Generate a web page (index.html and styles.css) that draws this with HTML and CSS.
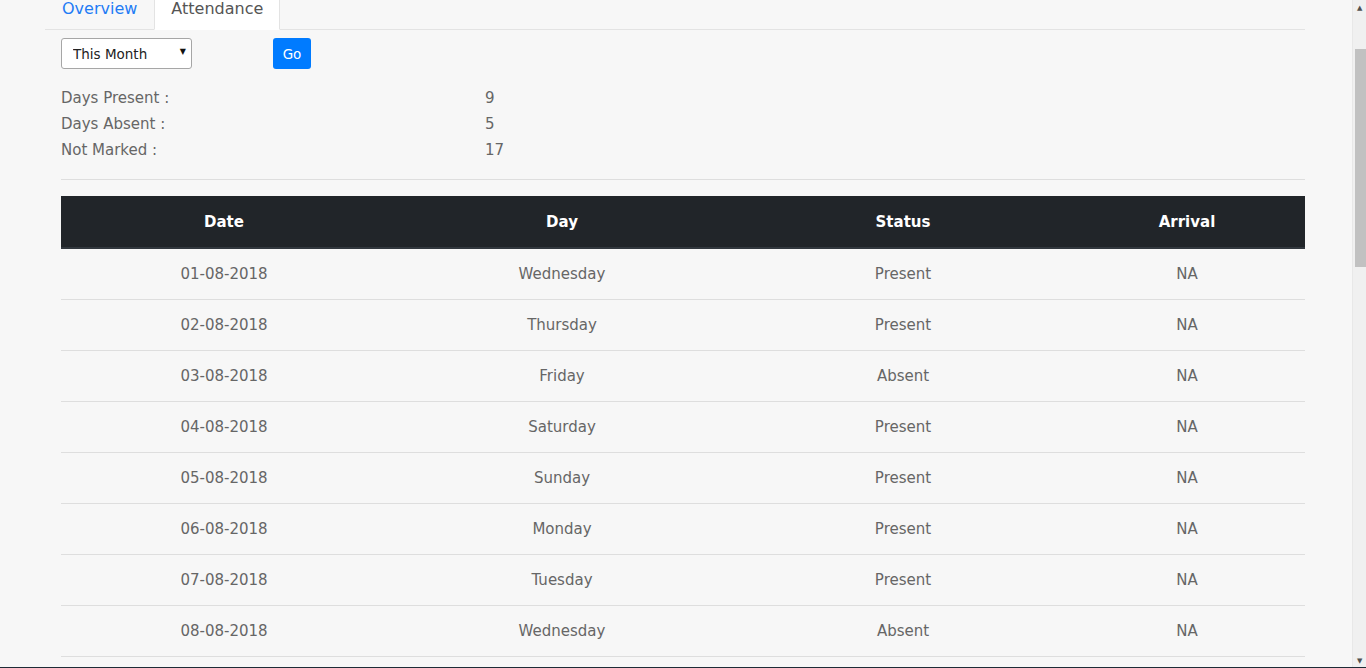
FILE: index.html
```html
<!DOCTYPE html>
<html lang="en">
<head>
    <meta charset="UTF-8">
    <meta name="viewport" content="width=device-width, initial-scale=1.0">
    <title>Attendance</title>
    <link rel="stylesheet" href="styles.css">
</head>
<body>
    <div class="page">
        <ul class="tabs">
            <li><a href="#" class="tab-link">Overview</a></li>
            <li><a href="#" class="tab-link active">Attendance</a></li>
        </ul>
        <div class="tab-content">
            <form class="filter">
                <span class="select-wrap">
                    <select class="period">
                        <option>This Month</option>
                        <option>Last Month</option>
                    </select>
                    <span class="caret">&#9660;</span>
                </span>
                <button type="button" class="go">Go</button>
            </form>

            <div class="summary">
                <div class="summary-row"><span class="label">Days Present :</span><span class="value">9</span></div>
                <div class="summary-row"><span class="label">Days Absent :</span><span class="value">5</span></div>
                <div class="summary-row"><span class="label">Not Marked :</span><span class="value">17</span></div>
            </div>

            <hr class="divider">

            <table class="attendance">
                <thead>
                    <tr>
                        <th class="c-date">Date</th>
                        <th class="c-day">Day</th>
                        <th class="c-status">Status</th>
                        <th class="c-arrival">Arrival</th>
                    </tr>
                </thead>
                <tbody>
                    <tr><td>01-08-2018</td><td>Wednesday</td><td>Present</td><td>NA</td></tr>
                    <tr><td>02-08-2018</td><td>Thursday</td><td>Present</td><td>NA</td></tr>
                    <tr><td>03-08-2018</td><td>Friday</td><td>Absent</td><td>NA</td></tr>
                    <tr><td>04-08-2018</td><td>Saturday</td><td>Present</td><td>NA</td></tr>
                    <tr><td>05-08-2018</td><td>Sunday</td><td>Present</td><td>NA</td></tr>
                    <tr><td>06-08-2018</td><td>Monday</td><td>Present</td><td>NA</td></tr>
                    <tr><td>07-08-2018</td><td>Tuesday</td><td>Present</td><td>NA</td></tr>
                    <tr><td>08-08-2018</td><td>Wednesday</td><td>Absent</td><td>NA</td></tr>
                </tbody>
            </table>
        </div>
    </div>

    <div class="scrollbar">
        <span class="arrow up">&#9650;</span>
        <span class="thumb"></span>
        <span class="arrow down">&#9660;</span>
    </div>
</body>
</html>
```

FILE: styles.css
```css
html, body {
    height: 100%;
    overflow: hidden;
}
body {
    margin: 0;
    background-color: #f7f7f7;
    font-family: "DejaVu Sans", sans-serif;
    color: #666;
    border-bottom: 1px solid #1f2b36;
    box-sizing: border-box;
}
.page {
    width: 1260px;
    margin-left: 45px;
    margin-top: -12px;
}
.tabs {
    display: flex;
    list-style: none;
    margin: 0;
    padding: 0;
    border-bottom: 1px solid #e3e3e3;
}
.tab-link {
    display: block;
    padding: 8px 16px;
    font-size: 16px;
    line-height: 24px;
    color: #1f7cf5;
    text-decoration: none;
    border: 1px solid transparent;
    margin-bottom: -1px;
}
.tab-link.active {
    color: #555;
    background-color: #fff;
    border-color: #e3e3e3 #e3e3e3 #fff;
}
.tab-content {
    padding-left: 16px;
}
.filter {
    display: flex;
    gap: 81px;
    margin-top: 8px;
}
.select-wrap {
    position: relative;
    display: inline-block;
}
.period {
    -webkit-appearance: none;
    appearance: none;
    width: 131px;
    height: 31px;
    padding: 0 0 0 11px;
    font-family: "DejaVu Sans", sans-serif;
    font-size: 13.5px;
    color: #222;
    background-color: #fff;
    border: 1px solid #a6a6a6;
    border-radius: 3px;
}
.caret {
    position: absolute;
    right: 6px;
    top: 9px;
    font-size: 8px;
    color: #111;
    pointer-events: none;
}
.go {
    width: 38px;
    height: 31px;
    padding: 0;
    font-family: "DejaVu Sans", sans-serif;
    font-size: 13.5px;
    color: #fff;
    background-color: #007bff;
    border: none;
    border-radius: 3px;
    cursor: pointer;
}
.summary {
    margin-top: 16px;
    font-size: 15px;
    line-height: 26px;
}
.summary-row {
    display: flex;
}
.label {
    width: 424px;
}
.divider {
    border: none;
    border-top: 1px solid #dedede;
    margin: 16px 0 16px;
}
.attendance {
    width: 1244px;
    border-collapse: collapse;
    table-layout: fixed;
    font-size: 15px;
}
.attendance th {
    height: 50px;
    padding: 1px 0 0;
    color: #fff;
    font-weight: bold;
    background-color: #212529;
    border-bottom: 2px solid #32383e;
}
.attendance td {
    height: 50px;
    padding: 0;
    text-align: center;
    border-bottom: 1px solid #dedede;
}
.c-date { width: 326px; }
.c-day { width: 350px; }
.c-status { width: 332px; }
.c-arrival { width: 236px; }

.scrollbar {
    position: fixed;
    top: 0;
    right: 0;
    width: 13px;
    height: 667px;
    background-color: #f0f0f0;
    border-left: 1px solid #e8e8e8;
}
.thumb {
    position: absolute;
    top: 49px;
    left: 2px;
    width: 11px;
    height: 218px;
    background-color: #c1c1c1;
}
.arrow {
    position: absolute;
    left: 4px;
    font-size: 7px;
    color: #505050;
}
.arrow.up { top: 4px; }
.arrow.down { bottom: 2px; }
```
